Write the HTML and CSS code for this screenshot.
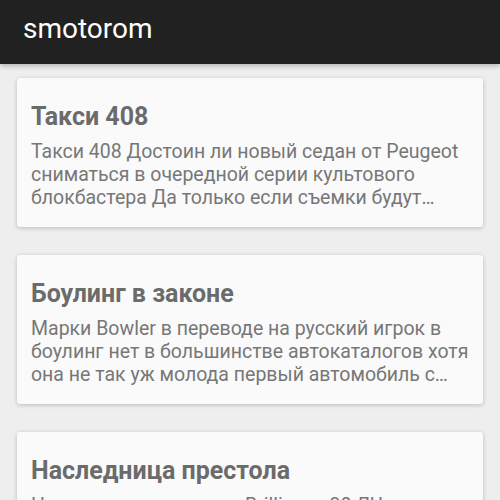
FILE: index.html
```html
<!DOCTYPE html>
<html lang="ru">
<head>
<meta charset="utf-8">
<title>smotorom</title>
<link rel="stylesheet" href="styles.css">
</head>
<body>
<header class="appbar"><h1 class="appbar-title">smotorom</h1></header>
<main class="list">
  <article class="card">
    <h2 class="card-title">Такси 408</h2>
    <p class="card-text">Такси 408 Достоин ли новый седан от Peugeot сниматься в очередной серии культового блокбастера Да только если съемки будут проходить в Китае</p>
  </article>
  <article class="card">
    <h2 class="card-title">Боулинг в законе</h2>
    <p class="card-text">Марки Bowler в переводе на русский игрок в боулинг нет в большинстве автокаталогов хотя она не так уж молода первый автомобиль с таким именем появился давно</p>
  </article>
  <article class="card">
    <h2 class="card-title">Наследница престола</h2>
    <p class="card-text">Наследница компании Brilliance 30 ЛЧ новая модель появилась на рынке в этом году</p>
  </article>
</main>
</body>
</html>
```
FILE: styles.css
```css
html, body {
  margin: 0;
  padding: 0;
}
body {
  background: #eeeeee;
  font-family: Roboto, "Noto Sans", sans-serif;
  overflow: hidden;
  height: 500px;
}
.appbar {
  height: 64px;
  background: #212121;
  box-shadow: 0 2px 5px rgba(0,0,0,0.25);
  display: flex;
  align-items: center;
  padding-left: 23px;
  position: relative;
  z-index: 1;
}
.appbar-title {
  margin: 0;
  color: #ffffff;
  font-weight: 400;
  font-size: 28px;
  line-height: 1;
  margin-top: -6px;
}
.list {
  padding: 14px 17px;
  display: flex;
  flex-direction: column;
  gap: 28px;
}
.card {
  background: #fafafa;
  border-radius: 3px;
  box-shadow: 0 1px 4px rgba(0,0,0,0.22);
  padding: 24px 8px 0 14px;
  height: 149px;
  box-sizing: border-box;
}
.card-title {
  margin: 0;
  font-size: 25px;
  line-height: 30px;
  font-weight: 700;
  color: #6b6b6b;
}
.card-text {
  margin: 8px 0 0;
  font-size: 19.5px;
  line-height: 23px;
  color: #777777;
  display: -webkit-box;
  -webkit-line-clamp: 3;
  -webkit-box-orient: vertical;
  overflow: hidden;
}
```
